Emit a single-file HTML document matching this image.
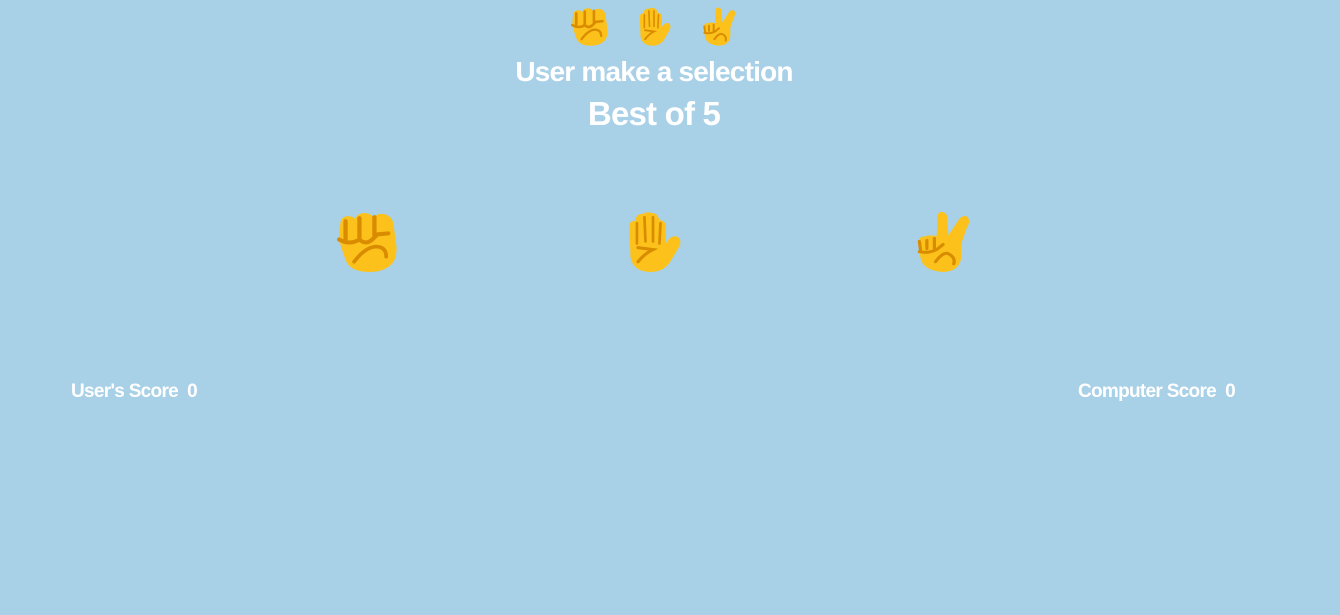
<!DOCTYPE html>
<html><head><meta charset="utf-8"><style>
html,body{margin:0;padding:0;width:1340px;height:615px;overflow:hidden;background:#a8d0e6;font-family:"Liberation Sans",sans-serif;color:#fff;font-weight:bold}
.t{position:absolute;left:0;width:1308px;text-align:center;white-space:nowrap}
svg{position:absolute}
.s{position:absolute;font-size:19px;letter-spacing:-0.7px;top:381px}
</style></head><body>
<svg width="0" height="0" style="position:absolute">
<defs>
<g id="fist">
<path d="M3 14 Q3 5 11 5 Q15 5 17 8 Q19 2 26 2 Q32 2 34 7 Q37 2 44 3 Q52 5 53 14 L55 30 Q57 42 53 50 Q46 60 30 60 Q12 60 8 48 L4 36 Q1 26 3 14Z" fill="#fcc21b"/>
<path d="M8 10 L8 28 M21 7 L21 26 M35 6 L35 24 M2 28 Q12 34 21 28 Q27 34 33 28 L38 23 L48 22" stroke="#d98c00" stroke-width="4" fill="none" stroke-linecap="round"/>
<path d="M16 50 Q26 36 36 35 Q46 35 46 45" stroke="#d98c00" stroke-width="3.5" fill="none" stroke-linecap="round"/>
</g>
<g id="hand">
<path d="M6 16 Q6 9 11 10 Q13 2 19 3 Q22 0 27 2 Q32 2 34 9 Q40 9 40 17 L40 32 Q44 24 50 25 Q56 28 52 36 L44 50 Q38 60 26 60 Q10 60 7 46Z" fill="#fcc21b"/>
<path d="M13 12 L13 32 M20 6 L21 30 M28 6 L28 30 M35 12 L34 32" stroke="#d98c00" stroke-width="2.5" fill="none" stroke-linecap="round"/>
<path d="M14 36 L28 38 Q20 42 14 50" stroke="#d98c00" stroke-width="3" fill="none" stroke-linecap="round"/>
</g>
<g id="vic">
<path d="M22 6 Q22 0 27 1 Q31 2 31 8 L32 24 L42 8 Q46 3 50 6 Q53 10 49 17 L44 32 L44 46 Q42 60 26 60 Q8 58 6 46 L4 32 Q4 25 10 25 Q15 23 21 25Z" fill="#fcc21b"/>
<path d="M5 30 L6 38 M12 29 L12 37 M19 27 L19 37 M5 40 Q14 42 21 38 L27 33 M20 50 Q27 40 32 42 Q39 46 37 52" stroke="#d98c00" stroke-width="3" fill="none" stroke-linecap="round"/>
</g>
</defs></svg>

<svg style="left:571px;top:7px" width="38" height="40" viewBox="0 0 58 62" preserveAspectRatio="none"><use href="#fist"/></svg>
<svg style="left:636px;top:7px" width="36" height="40" viewBox="0 0 56 62" preserveAspectRatio="none"><use href="#hand"/></svg>
<svg style="left:701px;top:7px" width="36" height="40" viewBox="0 0 54 62" preserveAspectRatio="none"><use href="#vic"/></svg>

<div class="t" style="top:56px;font-size:28px;letter-spacing:-0.8px">User make a selection</div>
<div class="t" style="top:95px;font-size:33px;letter-spacing:-0.8px">Best of 5</div>

<svg style="left:337px;top:211px" width="62" height="63" viewBox="0 0 58 62" preserveAspectRatio="none"><use href="#fist"/></svg>
<svg style="left:623px;top:211px" width="60" height="63" viewBox="0 0 56 62" preserveAspectRatio="none"><use href="#hand"/></svg>
<svg style="left:914px;top:211px" width="58" height="63" viewBox="0 0 54 62" preserveAspectRatio="none"><use href="#vic"/></svg>

<div class="s" style="left:71px">User's Score &nbsp;0</div>
<div class="s" style="left:1078px">Computer Score &nbsp;0</div>
</body></html>
